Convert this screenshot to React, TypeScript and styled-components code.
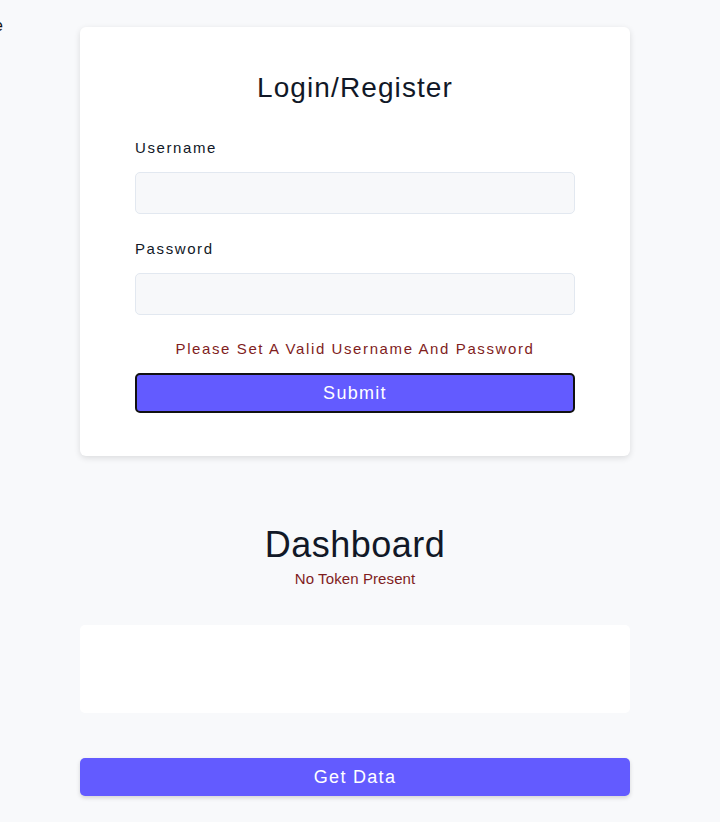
import React from "react";
import styled, { createGlobalStyle } from "styled-components";

const Global = createGlobalStyle`
  html, body {
    margin: 0;
    padding: 0;
    background: #f8f9fb;
    font-family: "Liberation Sans", Arial, sans-serif;
  }
`;

const Page = styled.div`
  position: relative;
  width: calc(100% - 10px);
  min-height: 822px;
  display: flex;
  flex-direction: column;
  align-items: center;
  padding-top: 27px;
  box-sizing: border-box;
`;

const Offscreen = styled.span`
  position: absolute;
  left: -6px;
  top: 17px;
  font-size: 16px;
  color: #111;
`;

const Column = styled.div`
  width: 550px;
  display: flex;
  flex-direction: column;
`;

const Card = styled.form`
  background: #fff;
  border-radius: 6px;
  box-shadow: 0 2px 6px rgba(0, 0, 0, 0.12);
  padding: 45px 55px 43px;
  display: flex;
  flex-direction: column;
`;

const Title = styled.h2`
  margin: 0 0 34px;
  font-size: 28px;
  line-height: 32px;
  font-weight: 400;
  letter-spacing: 1.1px;
  text-align: center;
  color: #111827;
`;

const Label = styled.label`
  display: block;
  font-size: 15px;
  line-height: 20px;
  letter-spacing: 1.6px;
  color: #111827;
  margin-bottom: 14px;
`;

const Input = styled.input`
  display: block;
  box-sizing: border-box;
  width: 100%;
  height: 42px;
  background: #f7f8fa;
  border: 1px solid #e2e8f0;
  border-radius: 5px;
  outline: none;
  margin-bottom: ${(p: { $mb: number }) => p.$mb}px;
`;

const ErrorText = styled.p`
  margin: 0 0 14px;
  font-size: 15px;
  line-height: 20px;
  letter-spacing: 1.6px;
  text-align: center;
  color: #7f1d1d;
`;

const SubmitButton = styled.button`
  height: 40px;
  background: #635bff;
  color: #fff;
  border: 2px solid #111;
  border-radius: 5px;
  font-family: inherit;
  font-size: 18px;
  letter-spacing: 1.3px;
  cursor: pointer;
`;

const Heading = styled.h1`
  margin: 68px 0 4px;
  font-size: 36px;
  line-height: 42px;
  font-weight: 400;
  letter-spacing: 0.5px;
  text-align: center;
  color: #111827;
`;

const Status = styled.p`
  margin: 0;
  font-size: 15px;
  line-height: 18px;
  letter-spacing: 0.1px;
  text-align: center;
  color: #7f1d1d;
`;

const DataBox = styled.div`
  margin-top: 37px;
  height: 88px;
  background: #fff;
  border-radius: 5px;
`;

const DataButton = styled.button`
  margin-top: 45px;
  height: 38px;
  background: #635bff;
  color: #fff;
  border: none;
  border-radius: 5px;
  box-shadow: 0 2px 4px rgba(0, 0, 0, 0.15);
  font-family: inherit;
  font-size: 18px;
  letter-spacing: 1.3px;
  cursor: pointer;
`;

export default function App() {
  return (
    <>
      <Global />
      <Page>
        <Offscreen>e</Offscreen>
        <Column>
          <Card onSubmit={(e) => e.preventDefault()}>
            <Title>Login/Register</Title>
            <Label htmlFor="username">Username</Label>
            <Input id="username" $mb={25} />
            <Label htmlFor="password">Password</Label>
            <Input id="password" type="password" $mb={24} />
            <ErrorText>Please Set A Valid Username And Password</ErrorText>
            <SubmitButton type="submit">Submit</SubmitButton>
          </Card>
          <Heading>Dashboard</Heading>
          <Status>No Token Present</Status>
          <DataBox />
          <DataButton type="button">Get Data</DataButton>
        </Column>
      </Page>
    </>
  );
}
